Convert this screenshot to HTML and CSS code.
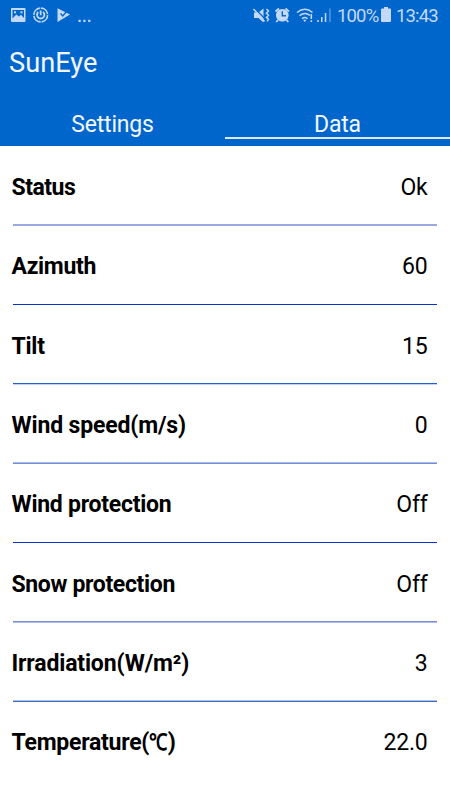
FILE: index.html
```html
<!DOCTYPE html>
<html lang="en">
<head>
<meta charset="utf-8">
<title>SunEye</title>
<link rel="stylesheet" href="styles.css">
</head>
<body>
<header class="header">
  <div class="status">
    <svg class="icons-left" width="95" height="30" viewBox="0 0 95 30" fill="#c3d9f5">
      <path fill-rule="evenodd" d="M12 8h12.500q1 0 1 1v12q0 1-1 1H12q-1 0-1-1V9q0-1 1-1zM12.500 10v8.500l3.800-4 2.600 2 2.100-1.700 3 3.300V10zM14 11.300h2v2h-2zM20.500 11.300h2v2h-2z"/>
      <g fill="none" stroke="#c3d9f5">
        <circle cx="40.700" cy="15" r="6.900" stroke-width="1.600" stroke-dasharray="9.800 1"/>
        <path d="M38.300 12a3.700 3.700 0 1 0 4.800 0M40.700 10.500v4.800" stroke-width="1.800"/>
      </g>
      <path d="M57.500 8.200L70 14.600 57.500 22z"/>
      <path d="M60.500 13.500l2.300 2.500 5-6" fill="none" stroke="#0567ce" stroke-width="1.400"/>
      <path d="M78.500 19.800h2.200V22h-2.200zM83.300 19.800h2.200V22h-2.200zM88.200 19.800h2.200V22h-2.200z"/>
    </svg>
    <svg class="icons-right" width="82" height="30" viewBox="252 0 82 30" fill="#c3d9f5">
      <path d="M254 12.500h4.500l5-4v14l-5-4.500H254z"/>
      <path d="M255 8.500l11 11.500" stroke="#0567ce" stroke-width="1.200"/>
      <path d="M253.500 9l11 12.500M266.500 9l2 2-2 2.200 2 2-2 2.200 2 2-1.500 2" fill="none" stroke="#c3d9f5" stroke-width="1.500"/>
      <circle cx="282.300" cy="15.300" r="6.300"/>
      <path d="M275.500 11.500l3.500-3M289 11.500l-3.500-3M278 20l-1.800 2M286.500 20l1.800 2" stroke="#c3d9f5" stroke-width="1.800"/>
      <path d="M282.300 11.300v4.500h3.700" fill="none" stroke="#0567ce" stroke-width="1.400"/>
      <g fill="none" stroke="#c3d9f5" stroke-width="1.500">
        <path d="M297 12.500q8-6.500 15.500 0M299.500 15.700q5.500-4.300 10.300-.4M302 18.700q3-2.300 5.500 0"/>
      </g>
      <path d="M303 19.700h3.500L304.800 22zM310.500 14h1.600v5h-1.600zM310.500 20.300h1.600V22h-1.600zM317.300 20h1.500v2h-1.500zM321 17h1.500v5H321zM324.800 13h1.500v9h-1.500z"/>
      <path d="M329.300 8.500h1.300V22h-1.300z" opacity=".5"/>
    </svg>
    <span class="percent">100%</span>
    <svg class="battery" width="10" height="15" viewBox="0 0 10 15" fill="#c3d9f5"><path d="M3 0h4v1.500h2q1 0 1 1V14q0 1-1 1H1q-1 0-1-1V2.500q0-1 1-1h2z"/></svg>
    <span class="clock">13:43</span>
  </div>
  <h1 class="title">SunEye</h1>
  <nav class="tabs">
    <div class="tab"><span>Settings</span></div>
    <div class="tab active"><span>Data</span></div>
  </nav>
</header>
<main class="list">
  <div class="row soft first"><b>Status</b><span>Ok</span></div>
  <div class="row crisp"><b class="tight">Azimuth</b><span>60</span></div>
  <div class="row short bright"><b>Tilt</b><span>15</span></div>
  <div class="row short mid"><b class="wide">Wind speed(m/s)</b><span>0</span></div>
  <div class="row crisp"><b>Wind protection</b><span>Off</span></div>
  <div class="row short fade"><b class="tight">Snow protection</b><span>Off</span></div>
  <div class="row short"><b class="wide">Irradiation(W/m²)</b><span>3</span></div>
  <div class="row last"><b>Temperature(<i class="degree">℃</i>)</b><span>22.0</span></div>
</main>
</body>
</html>
```
FILE: styles.css
```css
* { box-sizing: border-box; }
body {
  margin: 0;
  width: 450px;
  height: 800px;
  overflow: hidden;
  background: #fff;
  color: #000;
  font-family: Roboto, sans-serif;
}
.header {
  height: 146px;
  background: #0066cc;
  color: #f3f6ff;
}
.status {
  display: flex;
  height: 30px;
  color: #c3d9f5;
  font-size: 18.5px;
  letter-spacing: -0.85px;
  line-height: 32px;
}
.icons-left { flex: none; }
.icons-right { flex: none; margin-left: 157px; }
.percent { width: 41px; margin-left: 3px; white-space: nowrap; }
.battery { flex: none; margin: 7px 5px 0 3px; }
.clock { white-space: nowrap; }
.title {
  margin: 0;
  padding-left: 9px;
  height: 72px;
  font-size: 27.2px;
  font-weight: 400;
  line-height: 66px;
}
.tabs { display: flex; height: 44px; }
.tab {
  width: 225px;
  height: 37px;
  text-align: center;
  font-size: 23px;
  letter-spacing: -0.2px;
  line-height: 45px;
}
.active { border-bottom: 2px solid #dce9fb; }
.row {
  display: flex;
  justify-content: space-between;
  height: 80px;
  margin: 0 13px;
  padding: 0 9.5px 0 0;
  background: linear-gradient(#b4c2ed 50%, #3868c8 50%) 0 100% / 100% 2px no-repeat;
  font-size: 23px;
  letter-spacing: -0.2px;
  line-height: 81px;
  white-space: nowrap;
}
.row b { margin-left: -1.5px; font-weight: 700; letter-spacing: -0.25px; }
.row .wide { letter-spacing: -0.15px; }
.row .tight { letter-spacing: -0.34px; }
.first { line-height: 83px; }
.first b { letter-spacing: -0.5px; }
.short { height: 79px; }
.soft { background-image: linear-gradient(#9aaae0, #9aaae0); }
.crisp { background-image: linear-gradient(#0a31c8 50%, transparent 50%); }
.bright { background-image: linear-gradient(#2060d8 50%, #c5d0f3 50%); }
.mid { background-image: linear-gradient(#a9b9e8 50%, #708fd8 50%); }
.fade { background-image: linear-gradient(#788fd8 50%, #aebbe8 50%); }
.last { background: none; }
.degree {
  display: inline-block;
  width: 18.5px;
  font-style: normal;
  transform: scaleX(0.8);
  transform-origin: 0 50%;
}
```
